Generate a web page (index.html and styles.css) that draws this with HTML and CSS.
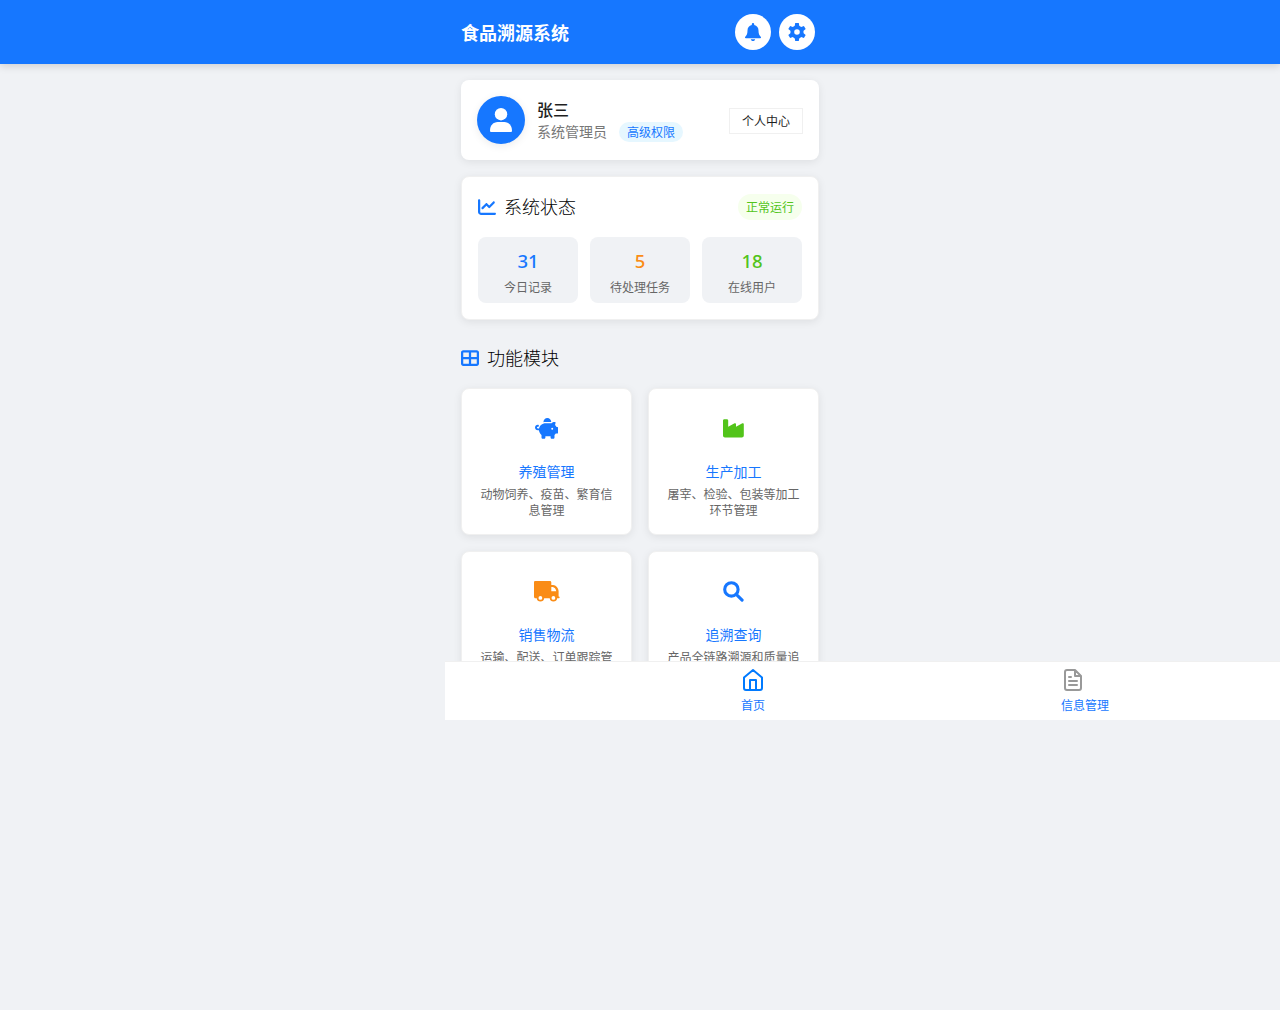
FILE: index.html
```html
<!DOCTYPE html>
<html lang="zh-CN">
<head>
<meta charset="utf-8">
<title>食品溯源系统</title>
<link rel="stylesheet" href="styles.css">
</head>
<body>
<header class="header">
  <div class="header-inner">
    <h1>食品溯源系统</h1>
    <div class="actions">
      <button class="round"><svg width="16" height="18" viewBox="0 0 16 18"><path d="M8 0a1.2 1.2 0 0 1 1.2 1.2V2c2.800.6 4.300 2.800 4.300 5.500 0 3.200.7 4.700 2.200 6.200.7.700.3 1.500-.5 1.500H.8c-.8 0-1.200-.8-.5-1.500 1.500-1.500 2.200-3 2.200-6.200C2.500 4.800 4 2.600 6.800 2V1.200A1.200 1.200 0 0 1 8 0zM5.800 16.200h4.400C10 17.300 9.200 18 8 18s-2-.7-2.200-1.800z"/></svg></button>
      <button class="round"><svg width="18" height="18" viewBox="0 0 18 18"><circle cx="9" cy="9" r="4.700" fill="none" stroke="currentColor" stroke-width="3.800"/><path d="M7.200 0h3.600l.6 3.500H6.600zM6.600 14.500h4.800l-.6 3.500H7.200z"/><path transform="rotate(60 9 9)" d="M7.200 0h3.600l.6 3.500H6.600zM6.600 14.500h4.800l-.6 3.500H7.200z"/><path transform="rotate(120 9 9)" d="M7.200 0h3.600l.6 3.500H6.600zM6.600 14.500h4.800l-.6 3.500H7.200z"/></svg></button>
    </div>
  </div>
</header>
<main class="content">
  <section class="card user">
    <div class="avatar"><svg width="22" height="24" viewBox="0 0 22 24"><circle cx="11" cy="6.200" r="6.200"/><path d="M0 22.500C0 17.500 3.300 14 7.700 14h6.600c4.400 0 7.700 3.500 7.700 8.500 0 1-.5 1.500-1.400 1.500H1.400C.5 24 0 23.500 0 22.500z"/></svg></div>
    <div class="user-info">
      <div class="name">张三</div>
      <div class="role">系统管理员<span class="badge">高级权限</span></div>
    </div>
    <button class="profile">个人中心</button>
  </section>
  <section class="card status">
    <div class="status-head">
      <h2><svg width="18" height="18" viewBox="0 0 512 512"><path d="M64 64c0-17.7-14.3-32-32-32S0 46.3 0 64V400c0 44.2 35.8 80 80 80H480c17.7 0 32-14.3 32-32s-14.3-32-32-32H80c-8.8 0-16-7.2-16-16V64zm406.6 86.6c12.5-12.5 12.5-32.8 0-45.3s-32.8-12.5-45.3 0L320 210.7l-57.4-57.4c-12.5-12.5-32.8-12.5-45.3 0l-112 112c-12.5 12.5-12.5 32.8 0 45.3s32.8 12.5 45.3 0L240 221.3l57.4 57.4c12.5 12.5 32.8 12.5 45.3 0l128-128z"/></svg>系统状态</h2>
      <span class="running">正常运行</span>
    </div>
    <div class="stats">
      <div class="stat"><strong class="blue">31</strong><span>今日记录</span></div>
      <div class="stat"><strong class="orange">5</strong><span>待处理任务</span></div>
      <div class="stat"><strong class="green">18</strong><span>在线用户</span></div>
    </div>
  </section>
  <h2 class="section-title"><svg width="18" height="18" viewBox="0 0 512 512"><path fill-rule="evenodd" d="M448 96V224H288V96H448zm0 192V416H288V288H448zM224 224H64V96H224V224zM64 288H224V416H64V288zM64 32C28.7 32 0 60.7 0 96V416c0 35.3 28.7 64 64 64H448c35.3 0 64-28.7 64-64V96c0-35.3-28.7-64-64-64H64z"/></svg>功能模块</h2>
  <section class="modules">
    <a class="card module"><svg class="blue" width="23.4" height="20.8" viewBox="0 0 576 512"><path d="M400 96l0 .7c-5.3-.4-10.6-.7-16-.7H256c-16.5 0-32.5 2.1-47.8 6c-.1-2-.2-4-.2-6c0-53 43-96 96-96s96 43 96 96zm-16 32c3.5 0 7 .1 10.4 .3c4.2 .3 8.4 .7 12.6 1.3C424.6 109.1 450.8 96 480 96h11.5c10.4 0 18 9.8 15.5 19.9l-13.8 55.2c15.8 14.8 28.7 32.8 37.5 52.9H544c17.7 0 32 14.3 32 32v96c0 17.7-14.3 32-32 32H512c-9.1 12.1-19.9 22.9-32 32v64c0 17.7-14.3 32-32 32H416c-17.7 0-32-14.3-32-32V448H256v32c0 17.7-14.3 32-32 32H192c-17.7 0-32-14.3-32-32V416c-34.9-26.2-58.7-66.3-63.2-112H68c-37.6 0-68-30.4-68-68s30.4-68 68-68h4c13.3 0 24 10.7 24 24s-10.7 24-24 24H68c-11 0-20 9-20 20s9 20 20 20H99.2c12.1-59.8 57.7-107.5 116.3-122.8c12.9-3.4 26.5-5.2 40.5-5.2H384zm64 136a24 24 0 1 0 -48 0 24 24 0 1 0 48 0z"/></svg><h3>养殖管理</h3><p>动物饲养、疫苗、繁育信息管理</p></a>
    <a class="card module"><svg class="green" width="20.8" height="20.8" viewBox="0 0 512 512"><path d="M32 32C14.3 32 0 46.3 0 64V304v48 80c0 26.5 21.5 48 48 48H464c26.5 0 48-21.5 48-48V304 152.2c0-18.2-19.4-29.7-35.4-21.1L320 215.4V152.2c0-18.2-19.4-29.7-35.4-21.1L128 215.4V64c0-17.7-14.3-32-32-32H32z"/></svg><h3>生产加工</h3><p>屠宰、检验、包装等加工环节管理</p></a>
    <a class="card module"><svg class="orange" width="26" height="20.8" viewBox="0 0 26 20.8"><path fill-rule="evenodd" d="M1.500 0H15.800c1 0 1.500.6 1.500 1.500V4h1.800c2.800 0 5.500 3.300 5.500 6.300v5.200h.3c1 0 1 1.800 0 1.800h-1.700a3.800 3.800 0 0 1-7.500 0h-5.500a3.800 3.800 0 0 1-7.500 0H1.500C.5 17.300 0 16.700 0 15.800V1.500C0 .5.500 0 1.500 0zM17.300 6v4.300H22.300C22 8.200 20.400 6 18.700 6zM6.400 15a1.900 1.900 0 1 0 0 3.800 1.900 1.900 0 0 0 0-3.800zm13 0a1.900 1.900 0 1 0 0 3.800 1.900 1.900 0 0 0 0-3.800z"/></svg><h3>销售物流</h3><p>运输、配送、订单跟踪管理</p></a>
    <a class="card module"><svg class="blue" width="20.8" height="20.8" viewBox="0 0 20.8 20.8"><path d="M13.800 13.800l5.300 5.300M15.100 8.400a6.700 6.700 0 1 1-13.400 0 6.700 6.700 0 0 1 13.400 0z" fill="none" stroke="currentColor" stroke-width="3.100" stroke-linecap="round"/></svg><h3>追溯查询</h3><p>产品全链路溯源和质量追踪</p></a>
  </section>
</main>
<nav class="tabbar">
  <a class="tab"><svg class="line home" width="24" height="24" viewBox="0 0 24 24"><path d="M3 9.5 12 2l9 7.5V20a2 2 0 0 1-2 2H5a2 2 0 0 1-2-2zM9 22V12h6v10"/></svg>首页</a>
  <a class="tab"><svg class="line doc" width="24" height="24" viewBox="0 0 24 24"><path d="M14 2H6a2 2 0 0 0-2 2v16a2 2 0 0 0 2 2h12a2 2 0 0 0 2-2V8zM14 2v6h6M16 13H8M16 17H8M10 9H8"/></svg>信息管理</a>
</nav>
</body>
</html>
```
FILE: styles.css
```css
* { box-sizing: border-box; margin: 0; padding: 0; }
body {
  height: 1010px;
  overflow: hidden;
  background: #f0f2f5;
  color: #1f1f1f;
  font-family: "Noto Sans", "Noto Sans CJK SC", sans-serif;
  font-weight: 400;
}
svg { display: block; flex: none; fill: currentColor; }
button { font: inherit; }
.blue { color: #1677ff; }
.orange { color: #fa8c16; }
.green { color: #52c41a; }

.header { position: relative; height: 64px; background: #1677ff; box-shadow: 0 2px 8px rgba(0, 0, 0, .15); }
.header-inner { width: 390px; height: 64px; margin: 0 auto; padding: 0 20px 0 16px; display: flex; align-items: center; justify-content: space-between; }
.header h1 { padding-top: 2px; font-size: 18px; line-height: 28px; font-weight: 700; color: #fff; }
.actions { display: flex; gap: 8px; }
.round { width: 36px; height: 36px; border: 0; border-radius: 50%; background: #fff; color: #1677ff; display: flex; align-items: center; justify-content: center; }

.content { width: 390px; height: 597px; margin: 0 auto; padding: 16px 16px 0; overflow: hidden; }
.card { background: #fff; border-radius: 8px; box-shadow: 0 2px 8px rgba(0, 0, 0, .08); }
.user { height: 80px; padding: 16px; display: flex; align-items: center; }
.avatar { width: 48px; height: 48px; border-radius: 50%; background: #1677ff; color: #fff; display: flex; align-items: center; justify-content: center; box-shadow: 0 2px 8px rgba(0, 0, 0, .08); }
.user-info { flex: 1; margin-left: 12px; padding-top: 1px; }
.name { font-size: 16px; line-height: 22px; font-weight: 500; }
.role { display: flex; align-items: center; margin-top: 1px; font-size: 14px; line-height: 20px; color: #777; }
.badge { margin-left: 12px; padding: 1px 8px 0; border-radius: 10px; background: #e6f7ff; color: #1677ff; font-size: 12px; line-height: 19px; }
.profile { width: 74px; height: 26px; margin-top: 2px; padding-top: 1px; border: 1px solid #f0f0f0; background: #fff; color: #1f1f1f; font-size: 12px; line-height: 23px; }

.status { height: 144px; margin-top: 16px; padding: 17px 16px 16px; border: 1px solid #f0f0f0; }
.status-head { display: flex; align-items: center; justify-content: space-between; height: 27px; }
h2 { display: flex; align-items: center; gap: 8px; font-size: 18px; line-height: 27px; font-weight: 300; color: #000; }
h2 svg { margin-top: -1px; color: #1677ff; }
.running { margin-top: -1px; padding: 1px 8px 0; border-radius: 13px; background: #f6ffed; color: #52c41a; font-size: 12px; line-height: 25px; }
.stats { display: grid; grid-template-columns: repeat(3, 1fr); gap: 12px; margin-top: 16px; }
.stat { height: 66px; padding: 9px 0 0; border-radius: 8px; background: #f0f2f5; text-align: center; }
.stat strong { display: block; font-size: 18.5px; line-height: 30px; font-weight: 500; }
.stat span { display: block; margin-top: 2px; font-size: 12px; line-height: 20px; color: #666; }

.section-title { margin: 25px 0 16px; }
.modules { display: grid; grid-template-columns: 1fr 1fr; gap: 16px; }
.module { height: 147px; padding: 29px 16px 0; border: 1px solid #f0f0f0; text-align: center; }
.module svg { margin: 0 auto; }
.module h3 { margin-top: 22px; font-size: 14px; line-height: 22px; font-weight: 400; color: #1677ff; }
.module p { margin-top: 4px; font-size: 12px; line-height: 16px; color: #666; }

.tabbar { height: 59px; margin-left: 445px; padding-left: 142px; border-top: 1px solid #f0f0f0; background: #fff; display: grid; grid-template-columns: 332px 332px; }
.tab { padding-top: 6px; display: flex; flex-direction: column; align-items: center; font-size: 12px; line-height: 20px; gap: 4px; color: #1677ff; }
.line { fill: none; stroke: currentColor; stroke-width: 2; stroke-linecap: round; stroke-linejoin: round; }
.home { color: #007aff; }
.doc { color: #999; margin-right: 24px; }
```
